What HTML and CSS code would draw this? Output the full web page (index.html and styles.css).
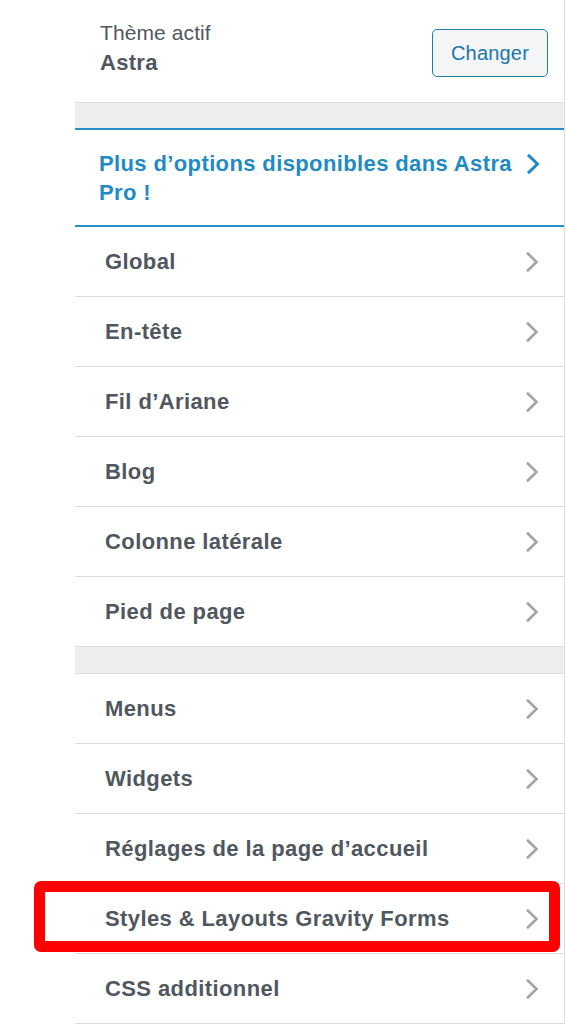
FILE: index.html
```html
<!DOCTYPE html>
<html lang="fr">
<head>
<meta charset="utf-8">
<title>Personnaliser</title>
<link rel="stylesheet" href="styles.css">
</head>
<body>
<div class="panel">
  <div class="theme-info">
    <div class="theme-text">
      <div class="theme-label">Thème actif</div>
      <div class="theme-name">Astra</div>
    </div>
    <button class="change-btn" type="button">Changer</button>
  </div>
  <div class="band"></div>
  <a class="promo" href="#">
    <span class="promo-text">Plus d’options disponibles dans Astra Pro !</span>
    <svg class="chev chev-blue" viewBox="0 0 14 22" width="14" height="22"><polyline points="2,1.8 11.5,11 2,20.2"/></svg>
  </a>
  <ul class="sections">
    <li class="item"><span>Global</span><svg class="chev" viewBox="0 0 14 22" width="14" height="22"><polyline points="2,1.8 11.5,11 2,20.2"/></svg></li>
    <li class="item"><span>En-tête</span><svg class="chev" viewBox="0 0 14 22" width="14" height="22"><polyline points="2,1.8 11.5,11 2,20.2"/></svg></li>
    <li class="item"><span>Fil d’Ariane</span><svg class="chev" viewBox="0 0 14 22" width="14" height="22"><polyline points="2,1.8 11.5,11 2,20.2"/></svg></li>
    <li class="item"><span>Blog</span><svg class="chev" viewBox="0 0 14 22" width="14" height="22"><polyline points="2,1.8 11.5,11 2,20.2"/></svg></li>
    <li class="item"><span>Colonne latérale</span><svg class="chev" viewBox="0 0 14 22" width="14" height="22"><polyline points="2,1.8 11.5,11 2,20.2"/></svg></li>
    <li class="item"><span>Pied de page</span><svg class="chev" viewBox="0 0 14 22" width="14" height="22"><polyline points="2,1.8 11.5,11 2,20.2"/></svg></li>
  </ul>
  <div class="band band-mid"></div>
  <ul class="sections">
    <li class="item"><span>Menus</span><svg class="chev" viewBox="0 0 14 22" width="14" height="22"><polyline points="2,1.8 11.5,11 2,20.2"/></svg></li>
    <li class="item"><span>Widgets</span><svg class="chev" viewBox="0 0 14 22" width="14" height="22"><polyline points="2,1.8 11.5,11 2,20.2"/></svg></li>
    <li class="item"><span>Réglages de la page d’accueil</span><svg class="chev" viewBox="0 0 14 22" width="14" height="22"><polyline points="2,1.8 11.5,11 2,20.2"/></svg></li>
    <li class="item highlighted"><span>Styles &amp; Layouts Gravity Forms</span><svg class="chev" viewBox="0 0 14 22" width="14" height="22"><polyline points="2,1.8 11.5,11 2,20.2"/></svg><span class="mark"></span></li>
    <li class="item"><span>CSS additionnel</span><svg class="chev" viewBox="0 0 14 22" width="14" height="22"><polyline points="2,1.8 11.5,11 2,20.2"/></svg></li>
  </ul>
</div>
</body>
</html>
```

FILE: styles.css
```css
* { box-sizing: border-box; }

html, body {
  margin: 0;
  padding: 0;
  background: #ffffff;
}

body {
  font-family: "Liberation Sans", Arial, Helvetica, sans-serif;
  color: #50575e;
  overflow: hidden;
}

.panel {
  margin-left: 75px;
  width: 490px;
  border-right: 1px solid #dcdcde;
  background: #fdfdfd;
  min-height: 1024px;
}

.theme-info {
  height: 102px;
  display: flex;
  justify-content: space-between;
  align-items: flex-start;
  padding: 18px 16px 0 25px;
  background: #ffffff;
}

.theme-text {
  font-size: 21px;
  line-height: 30px;
}

.theme-label {
  font-weight: normal;
  color: #50575e;
  letter-spacing: 0.1px;
}

.theme-name {
  font-weight: bold;
  font-size: 22px;
  color: #50575e;
  letter-spacing: 0.3px;
}

.change-btn {
  margin-top: 11px;
  width: 116px;
  height: 48px;
  border: 1.5px solid #1e7fb3;
  border-radius: 5px;
  background: #f4f5f6;
  color: #1a76aa;
  font-family: "Liberation Sans", Arial, Helvetica, sans-serif;
  font-size: 20px;
  letter-spacing: 0.2px;
  padding: 0;
}

.band {
  height: 26px;
  border-top: 1px solid #dcdcde;
  background: #eeeeee;
}

.band-mid {
  height: 27px;
  border-top: none;
  border-bottom: 1px solid #dcdcde;
}

.promo {
  display: flex;
  justify-content: space-between;
  align-items: flex-start;
  padding: 19px 24px 18px 24px;
  border-top: 2px solid #2a8fc9;
  border-bottom: 2px solid #2a8fc9;
  background: #ffffff;
  text-decoration: none;
  color: #1f8ac4;
  font-size: 22px;
  font-weight: bold;
  line-height: 29px;
  letter-spacing: 0.38px;
}

.promo-text {
  max-width: 440px;
}

.sections {
  list-style: none;
  margin: 0;
  padding: 0;
}

.item {
  position: relative;
  height: 70px;
  display: flex;
  justify-content: space-between;
  align-items: center;
  padding: 0 25px 0 30px;
  border-bottom: 1px solid #dcdcde;
  background: #ffffff;
  font-size: 22px;
  font-weight: bold;
  letter-spacing: 0.4px;
  color: #50575e;
}

.chev {
  flex: none;
  fill: none;
  stroke: #a0a5aa;
  stroke-width: 2.6;
  stroke-linecap: butt;
  stroke-linejoin: miter;
}

.chev-blue {
  stroke: #1f8ac4;
  stroke-width: 3;
  margin-top: 4px;
  margin-right: 0;
}

.mark {
  position: absolute;
  left: -41px;
  top: -3px;
  right: 4px;
  bottom: 1px;
  border: 11px solid #ff0000;
  border-radius: 7px;
  pointer-events: none;
}
```
